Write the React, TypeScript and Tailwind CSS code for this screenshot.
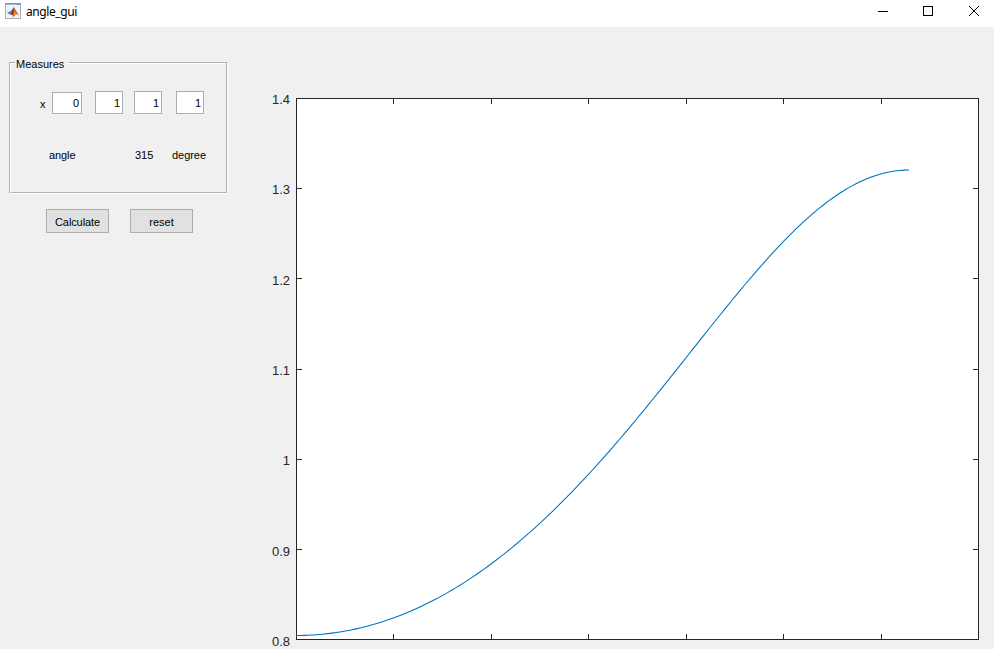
import React from "react";

const PLOT_SPAN = 613;
const COEFFS = [333.3, 229.4, -28.05, 3.35, -0.5];

function curvePath() {
  const parts: string[] = [];
  for (let x = 0; x <= PLOT_SPAN; x += 4) {
    parts.push(point(x));
  }
  parts.push(point(PLOT_SPAN));
  return `M${parts.join("L")}`;
}

function point(x: number) {
  const angle = (Math.PI * x) / PLOT_SPAN;
  const y = COEFFS.reduce((sum, c, n) => sum + c * Math.cos(n * angle), 0);
  return `${x} ${y.toFixed(2)}`;
}

const xTicks = [97, 195, 292, 390, 487, 585];
const yTicks = [90, 180, 271, 361, 451];
const labels = ["1.4", "1.3", "1.2", "1.1", "1", "0.9", "0.8"];

function Logo() {
  return (
    <svg width="16" height="16" viewBox="0 0 16 16" className="block">
      <rect x=".5" y=".5" width="15" height="15" fill="#f0f4f8" stroke="#a3b1bf" />
      <rect width="16" height="2" fill="#7097bd" />
      <rect x="1" y="1" width="11" height="1" fill="#8fc0e8" />
      <path d="M2 9.8 5.5 8.2 8.6 4.5 8 9 5.4 11.8z" fill="#3c86c4" />
      <path d="M5 11.6 7 9.4 8.9 4 10.2 6.2 14 12.6 11.4 11 8.3 14 7 12z" fill="#d9601f" />
      <path d="M8.9 4 8.8 9 7.2 12 6 10.8 7.5 8z" fill="#7d2a22" />
      <path d="M9.6 7 10.5 10.6 8.8 12.8z" fill="#f7a83a" />
    </svg>
  );
}

function Field({ value, className }: { value: string; className: string }) {
  return (
    <input
      readOnly
      value={value}
      className={`block rounded-none border border-[#abadb3] bg-white p-0 pr-[2px] text-right text-[11px] leading-none outline-none ${className}`}
    />
  );
}

export default function App() {
  return (
    <div className="flex h-[649px] w-[994px] flex-col overflow-hidden bg-[#f0f0f0] font-['Liberation_Sans',Arial,sans-serif] text-[11px] text-black">
      <header className="flex h-[27px] shrink-0 items-start bg-white">
        <div className="ml-[5px] mt-[3px]"><Logo /></div>
        <span className="ml-[5px] mt-[3px] font-['Noto_Sans','Open_Sans',sans-serif] text-[12px] leading-[18px] tracking-[-0.42px]">angle_gui</span>
        <svg className="ml-auto block" width="120" height="27" fill="none" stroke="#000" shapeRendering="crispEdges">
          <path d="M4 11.5h10M49.5 6.5h9v9h-9z" />
          <path d="M95 6l10 10M105 6l-10 10" shapeRendering="auto" />
        </svg>
      </header>
      <main className="flex min-h-0 flex-1">
        <aside className="w-[264px] shrink-0 pl-[9px] pt-[29px]">
          <fieldset className="m-0 h-[138px] w-[219px] min-w-0 p-0">
            <div className="flex h-[13px] items-start">
              <span className="h-[7px] w-[6px] shrink-0 self-end border-l border-t border-[#b0b0b0] shadow-[inset_1px_1px_0_#fff]" />
              <span className="w-[54px] shrink-0 pl-px pt-[2px] leading-[13px]">Measures</span>
              <span className="h-[7px] flex-1 self-end border-r border-t border-r-white border-t-[#b0b0b0] shadow-[inset_-1px_0_0_#b0b0b0,inset_0_1px_0_#fff]" />
            </div>
            <div className="h-[125px] border-b border-l border-r border-b-white border-l-[#b0b0b0] border-r-white shadow-[inset_1px_0_0_#fff,inset_-1px_-1px_0_#b0b0b0]">
              <div className="flex h-[45px] items-end">
                <span className="ml-[30px] w-[12px] pb-[3px] leading-[13px]">x</span>
                <Field value="0" className="h-[22px] w-[30px]" />
                <Field value="1" className="ml-[13px] h-[23px] w-[28px]" />
                <Field value="1" className="ml-[11px] h-[23px] w-[28px]" />
                <Field value="1" className="ml-[14px] h-[23px] w-[28px]" />
              </div>
              <div className="flex pt-[34px] leading-[15px]">
                <span className="ml-[39px] w-[86px] tracking-[-0.1px]">angle</span>
                <span className="w-[37px]">315</span>
                <span className="tracking-[-0.05px]">degree</span>
              </div>
            </div>
          </fieldset>
          <div className="ml-[37px] mt-[15px] flex gap-[21px]">
            <button className="h-[24px] w-[63px] border border-[#adadad] bg-[#e1e1e1] p-0 pt-[2px] leading-none tracking-[-0.1px]">Calculate</button>
            <button className="h-[24px] w-[63px] border border-[#adadad] bg-[#e1e1e1] p-0 pt-[2px] leading-none">reset</button>
          </div>
        </aside>
        <section className="flex pt-[71px]">
          <div className="-mt-[6px] w-[32px] pr-[6px] text-right text-[13px] text-[#262626]">
            {labels.map((label) => (
              <div key={label} className="h-[90.35px] leading-[16px]">{label}</div>
            ))}
          </div>
          <svg className="block" width="683" height="542" fill="none" stroke="#262626">
            <rect x=".5" y=".5" width="682" height="541" fill="#fff" shapeRendering="crispEdges" />
            <g shapeRendering="crispEdges">
              {xTicks.map((x) => <path key={x} d={`M${x + 0.5} 0v6M${x + 0.5} 542v-6`} />)}
              {yTicks.map((y) => <path key={y} d={`M0 ${y + 0.5}h6M683 ${y + 0.5}h-6`} />)}
            </g>
            <path d={curvePath()} stroke="#0072bd" strokeWidth="1.05" />
          </svg>
        </section>
      </main>
    </div>
  );
}
